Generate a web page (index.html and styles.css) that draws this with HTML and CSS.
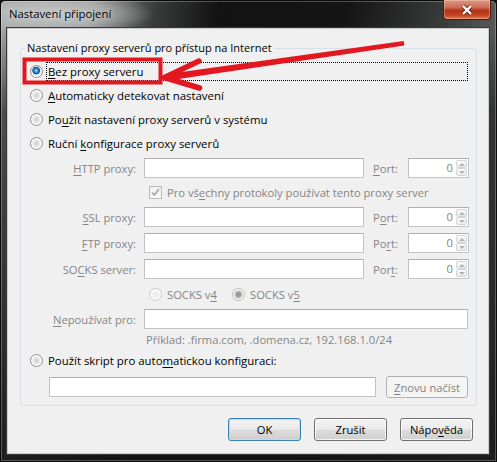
FILE: index.html
```html
<!DOCTYPE html>
<html lang="cs">
<head>
<meta charset="utf-8">
<title>Nastavení připojení</title>
<link rel="stylesheet" href="styles.css">
</head>
<body>
<div class="window">
  <div class="titlebar">
    <span class="title">Nastavení připojení</span>
    <button class="close" aria-label="Zavřít">
      <svg width="14" height="12" viewBox="0 0 14 12"><path d="M3 2 L11 10 M11 2 L3 10" stroke="#3a1208" stroke-width="4.4" opacity=".55" fill="none"/><path d="M3 2 L11 10 M11 2 L3 10" stroke="#fff" stroke-width="2.4" fill="none"/></svg>
    </button>
  </div>
  <div class="client">
    <fieldset class="group">
      <legend>Nastavení proxy serverů pro přístup na Internet</legend>

      <div class="opt"><span class="radio checked"></span><span class="opt-label focus"><u>B</u>ez proxy serveru</span></div>
      <div class="opt"><span class="radio"></span><span class="opt-label"><u>A</u>utomaticky detekovat nastavení</span></div>
      <div class="opt"><span class="radio"></span><span class="opt-label">Po<u>u</u>žít nastavení proxy serverů v systému</span></div>
      <div class="opt"><span class="radio"></span><span class="opt-label">Ruční <u>k</u>onfigurace proxy serverů</span></div>

      <div class="field">
        <span class="flabel"><u>H</u>TTP proxy:</span>
        <span class="input main"></span>
        <span class="plabel"><u>P</u>ort:</span>
        <span class="spin"><span class="spin-val">0</span><span class="spin-btns"><span class="sb"><span class="tri up"></span></span><span class="sb"><span class="tri down"></span></span></span></span>
      </div>

      <div class="chk-row">
        <span class="check"><svg width="11" height="11" viewBox="0 0 11 11"><path d="M2 5.6 L4.3 8 L9 2.2" stroke="#a4a4a4" stroke-width="1.6" fill="none"/></svg></span>
        <span class="dis">Pro vš<u>e</u>chny protokoly používat tento proxy server</span>
      </div>

      <div class="field">
        <span class="flabel"><u>S</u>SL proxy:</span>
        <span class="input main"></span>
        <span class="plabel">P<u>o</u>rt:</span>
        <span class="spin"><span class="spin-val">0</span><span class="spin-btns"><span class="sb"><span class="tri up"></span></span><span class="sb"><span class="tri down"></span></span></span></span>
      </div>

      <div class="field">
        <span class="flabel"><u>F</u>TP proxy:</span>
        <span class="input main"></span>
        <span class="plabel">Po<u>r</u>t:</span>
        <span class="spin"><span class="spin-val">0</span><span class="spin-btns"><span class="sb"><span class="tri up"></span></span><span class="sb"><span class="tri down"></span></span></span></span>
      </div>

      <div class="field">
        <span class="flabel">SO<u>C</u>KS server:</span>
        <span class="input main"></span>
        <span class="plabel">Por<u>t</u>:</span>
        <span class="spin"><span class="spin-val">0</span><span class="spin-btns"><span class="sb"><span class="tri up"></span></span><span class="sb"><span class="tri down"></span></span></span></span>
      </div>

      <div class="socks-row">
        <span class="socks-opt first"><span class="radio disabled"></span><span class="dis">SOCKS v<u>4</u></span></span>
        <span class="socks-opt"><span class="radio checked-dis"></span><span class="dis">SOCKS v<u>5</u></span></span>
      </div>

      <div class="field">
        <span class="flabel"><u>N</u>epoužívat pro:</span>
        <span class="input wide"></span>
      </div>

      <div class="example dis">Příklad: .firma.com, .domena.cz, 192.168.1.0/24</div>

      <div class="opt"><span class="radio"></span><span class="opt-label">Použít skript pro auto<u>m</u>atickou konfiguraci:</span></div>

      <div class="url-row">
        <span class="input url"></span>
        <button class="btn disabled-btn"><u>Z</u>novu načíst</button>
      </div>
    </fieldset>

    <div class="actions">
      <button class="btn default">OK</button>
      <button class="btn">Zrušit</button>
      <button class="btn">Nápo<u>v</u>ěda</button>
    </div>
  </div>

  <svg class="annot" width="497" height="462" viewBox="0 0 497 462">
    <rect x="24.5" y="59.5" width="136" height="23" fill="none" stroke="#e3171f" stroke-width="4"/>
    <path d="M403.7 41 L404.3 45.5 L166.6 80.7 L165.4 74.3 Z" fill="#e3171f"/>
    <path d="M199 61 L164.5 77.5 L199.5 88" fill="none" stroke="#e3171f" stroke-width="5.5" stroke-linecap="round" stroke-linejoin="round"/>
  </svg>
</div>
</body>
</html>
```

FILE: styles.css
```css
* { box-sizing: border-box; }

html, body {
  margin: 0;
  padding: 0;
}

body {
  background: #141414;
  font-family: "Open Sans", "Noto Sans", "DejaVu Sans", sans-serif;
  font-size: 11.2px;
  color: #111;
}

u {
  text-decoration-thickness: 1px;
  text-underline-offset: 1.5px;
}

.window {
  position: relative;
  width: 497px;
  height: 462px;
  display: flex;
  flex-direction: column;
  border: 1px solid #0b0b0b;
  border-radius: 5px 5px 0 0;
  box-shadow: inset 0 0 0 1px rgba(255, 255, 255, 0.25);
  background:
    radial-gradient(ellipse 95px 22px at 58px 13px, rgba(205, 207, 207, 0.85) 0%, rgba(205, 207, 207, 0.5) 55%, rgba(205, 207, 207, 0) 100%),
    linear-gradient(to bottom, rgba(20, 20, 20, 0) 0, rgba(20, 20, 20, 0) 26px, rgba(20, 20, 20, 0.6) 110px, rgba(20, 20, 20, 0.92) 460px),
    linear-gradient(100deg, #a5a7a7 0%, #8b8d8d 16%, #3a3b3b 27%, #121212 38%, #141414 60%, #3b3c3c 78%, #6a6c6c 92%, #7e8080 100%);
}

.titlebar {
  height: 27px;
  display: flex;
  align-items: flex-start;
}

.title {
  margin: 5px 0 0 8px;
  font-size: 11.3px;
  line-height: 16px;
  color: #000;
  text-shadow: 0 0 5px rgba(235, 235, 235, 0.8);
}

.close {
  margin: -1px 5px 0 auto;
  width: 48px;
  height: 20px;
  padding: 0;
  display: flex;
  align-items: center;
  justify-content: center;
  border: 1px solid #4a1a10;
  border-top: none;
  border-radius: 0 0 4px 4px;
  background: linear-gradient(to bottom, #dc9a88 0%, #cc6a52 40%, #b4341c 55%, #c0401f 78%, #e27a52 100%);
  box-shadow: inset 0 0 0 1px rgba(255, 220, 200, 0.35);
}

.client {
  flex: 1;
  margin: 0 7px 7px 6px;
  background: #f0f0f0;
  border: 1px solid #c9cbcd;
  box-shadow: 0 0 0 1px #3a3a3a;
  display: flex;
  flex-direction: column;
}

.group {
  margin: 11px 11px 0 12px;
  padding: 3px 0 3px 0;
  min-width: 0;
  border: 1px solid #d5dfe5;
  border-radius: 3px;
}

.group legend {
  margin-left: 4px;
  padding: 0 2px;
  line-height: 16px;
  font-size: 11px;
  color: #000;
}

.opt {
  display: flex;
  align-items: center;
  height: 24px;
  padding-left: 9px;
  font-size: 11.4px;
  color: #000;
}

.opt-label {
  margin-left: 3px;
  padding: 0 1px;
  border: 1px dotted transparent;
  line-height: 17px;
}

.opt-label.focus {
  flex: 1;
  margin-right: 8px;
  border-color: #000;
}

.radio {
  flex: none;
  width: 13px;
  height: 13px;
  border-radius: 50%;
  border: 1px solid #8c8c8c;
  background: radial-gradient(circle at 50% 50%, #d2d2d2 0, #e2e2e2 2.5px, #f1f1f1 4px, #ffffff 5px);
}

.radio.checked {
  background: radial-gradient(circle at 47% 42%, #b4e6ff 0, #45a6e8 1.4px, #1a69ad 2.8px, #104f8d 3.5px, #d2d9df 4.1px, #f4f4f4 4.8px, #ffffff 5.5px);
}

.radio.disabled {
  border-color: #c8c8c8;
  background: radial-gradient(circle at 50% 50%, #ebebeb 0, #f0f0f0 3px, #f7f7f7 4.5px, #ffffff 5.5px);
}

.radio.checked-dis {
  border-color: #b8b8b8;
  background: radial-gradient(circle at 50% 50%, #8f8f8f 0, #a3a3a3 2.2px, #bdbdbd 3.3px, #e6e6e6 4.2px, #fafafa 5px);
}

.dis {
  color: #858585;
}

.field {
  display: flex;
  align-items: center;
  height: 26px;
  color: #858585;
}

.flabel {
  width: 115px;
  text-align: right;
}

.input {
  height: 20px;
  background: #fff;
  border: 1px solid #c3c3c3;
  border-top-color: #aeaeae;
}

.input.main {
  margin-left: 8px;
  width: 220px;
}

.input.wide {
  margin-left: 8px;
  width: 324px;
}

.plabel {
  margin-left: 9px;
  width: 27px;
}

.spin {
  margin-left: 8px;
  width: 61px;
  height: 20px;
  display: flex;
  align-items: stretch;
  background: #fff;
  border: 1px solid #c3c3c3;
  border-top-color: #aeaeae;
}

.spin-val {
  flex: 1;
  text-align: right;
  line-height: 18px;
  padding-right: 3px;
  color: #858585;
}

.spin-btns {
  width: 11px;
  margin: 1px 1px 1px 0;
  display: flex;
  flex-direction: column;
}

.sb {
  flex: 1;
  display: flex;
  align-items: center;
  justify-content: center;
  border: 1px solid #d4d4d4;
  border-radius: 2px;
  background: linear-gradient(#fafafa, #ececec);
}

.tri {
  width: 0;
  height: 0;
  border-left: 3px solid transparent;
  border-right: 3px solid transparent;
}

.tri.up { border-bottom: 3px solid #b3b3b3; }
.tri.down { border-top: 3px solid #b3b3b3; }

.chk-row {
  display: flex;
  align-items: center;
  height: 23px;
  padding-left: 128px;
  gap: 5px;
}

.check {
  flex: none;
  width: 13px;
  height: 13px;
  border: 1px solid #b9b9b9;
  background: linear-gradient(#efefef, #fbfbfb);
  display: flex;
  align-items: center;
  justify-content: center;
}

.socks-row {
  display: flex;
  align-items: center;
  height: 24px;
  padding-left: 128px;
}

.socks-opt {
  display: flex;
  align-items: center;
  gap: 5px;
}

.socks-opt.first {
  width: 83px;
}

.example {
  height: 16px;
  line-height: 16px;
  padding-left: 125px;
}

.url-row {
  display: flex;
  align-items: center;
  height: 30px;
  padding-left: 28px;
}

.input.url {
  width: 327px;
}

.btn {
  width: 73px;
  height: 23px;
  padding: 0;
  font-family: inherit;
  font-size: 11.2px;
  color: #000;
  border: 1px solid #707070;
  border-radius: 3px;
  background: linear-gradient(to bottom, #f2f2f2 0, #ebebeb 48%, #dddddd 52%, #cfcfcf 100%);
  box-shadow: inset 0 0 0 1px rgba(255, 255, 255, 0.75);
}

.btn.default {
  border-color: #3c7fb1;
  box-shadow: inset 0 0 0 1px #b4e0f7;
}

.btn.disabled-btn {
  margin-left: 10px;
  width: 82px;
  height: 22px;
  color: #838383;
  border-color: #adb2b5;
  background: #f4f4f4;
  box-shadow: none;
}

.actions {
  display: flex;
  justify-content: flex-end;
  gap: 13px;
  margin: 12px 15px 0 0;
}

.annot {
  position: absolute;
  left: -1px;
  top: -1px;
  pointer-events: none;
}
```
